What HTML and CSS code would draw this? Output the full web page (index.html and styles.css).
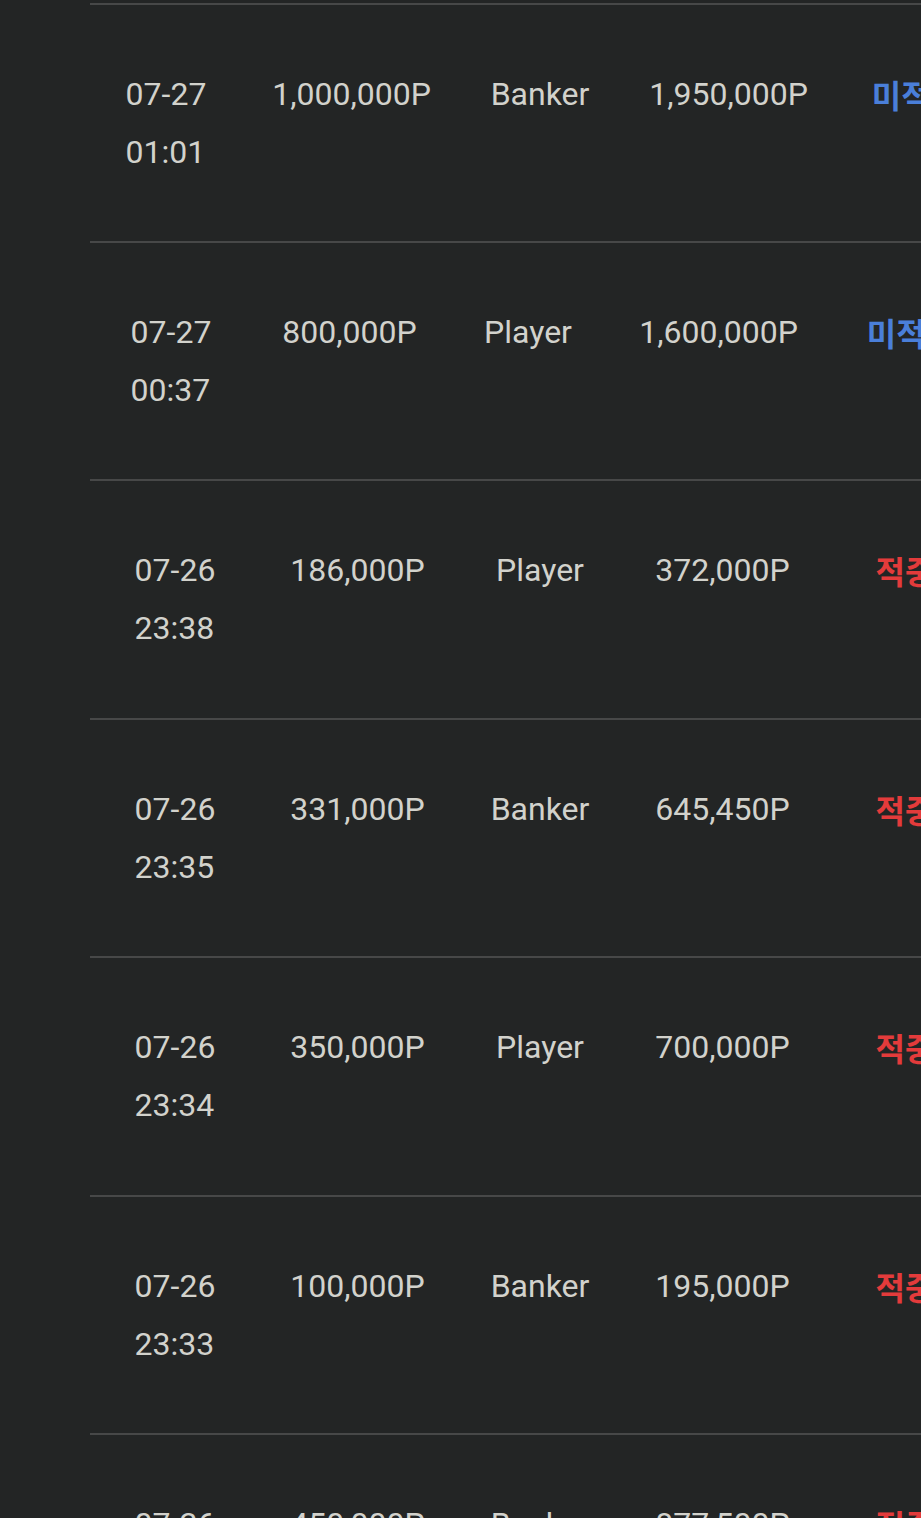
FILE: index.html
```html
<!DOCTYPE html>
<html lang="ko">
<head>
    <meta charset="UTF-8">
    <meta name="viewport" content="width=device-width, initial-scale=1.0">
    <title>베팅 내역</title>
    <link rel="stylesheet" href="styles.css">
</head>
<body>

<div class="history">

    <div class="bet-row bet-row-wide">
        <div class="cell">07-27<br>01:01</div>
        <div class="cell">1,000,000P</div>
        <div class="cell">Banker</div>
        <div class="cell">1,950,000P</div>
        <div class="cell result lose">미적중</div>
    </div>

    <div class="bet-row bet-row-mid">
        <div class="cell">07-27<br>00:37</div>
        <div class="cell">800,000P</div>
        <div class="cell">Player</div>
        <div class="cell">1,600,000P</div>
        <div class="cell result lose">미적중</div>
    </div>

    <div class="bet-row">
        <div class="cell">07-26<br>23:38</div>
        <div class="cell">186,000P</div>
        <div class="cell">Player</div>
        <div class="cell">372,000P</div>
        <div class="cell result win">적중</div>
    </div>

    <div class="bet-row">
        <div class="cell">07-26<br>23:35</div>
        <div class="cell">331,000P</div>
        <div class="cell">Banker</div>
        <div class="cell">645,450P</div>
        <div class="cell result win">적중</div>
    </div>

    <div class="bet-row">
        <div class="cell">07-26<br>23:34</div>
        <div class="cell">350,000P</div>
        <div class="cell">Player</div>
        <div class="cell">700,000P</div>
        <div class="cell result win">적중</div>
    </div>

    <div class="bet-row">
        <div class="cell">07-26<br>23:33</div>
        <div class="cell">100,000P</div>
        <div class="cell">Banker</div>
        <div class="cell">195,000P</div>
        <div class="cell result win">적중</div>
    </div>

    <div class="bet-row">
        <div class="cell">07-26<br>23:31</div>
        <div class="cell">450,000P</div>
        <div class="cell">Banker</div>
        <div class="cell">877,500P</div>
        <div class="cell result win">적중</div>
    </div>

</div>

</body>
</html>
```

FILE: styles.css
```css
html, body {
    margin: 0;
    padding: 0;
    background: #232525;
    overflow: hidden;
}
body {
    font-family: Roboto, "Noto Sans CJK KR", sans-serif;
    color: #d2d2cc;
    width: 921px;
    height: 1518px;
}
.history {
    margin-left: 90px;
    padding-top: 2.6px;
    width: 1000px;
}
.bet-row {
    display: grid;
    grid-template-columns: 170px 195px 170px 195px 170px;
    justify-items: center;
    align-items: start;
    border-top: 2px solid #474848;
    padding: 60px 0 60.4px;
    font-size: 32px;
    line-height: 58px;
    white-space: nowrap;
}
/* columns shift with the width of the numbers */
.bet-row-wide {
    grid-template-columns: 152px 219px 158px 219px 156px;
}
.bet-row-mid {
    grid-template-columns: 162px 195px 162px 219px 166px;
}
.result {
    font-family: "Noto Sans CJK KR", sans-serif;
    font-weight: bold;
}
.result.lose {
    color: #4a7fd9;
}
.result.win {
    color: #e33b3b;
}
```
